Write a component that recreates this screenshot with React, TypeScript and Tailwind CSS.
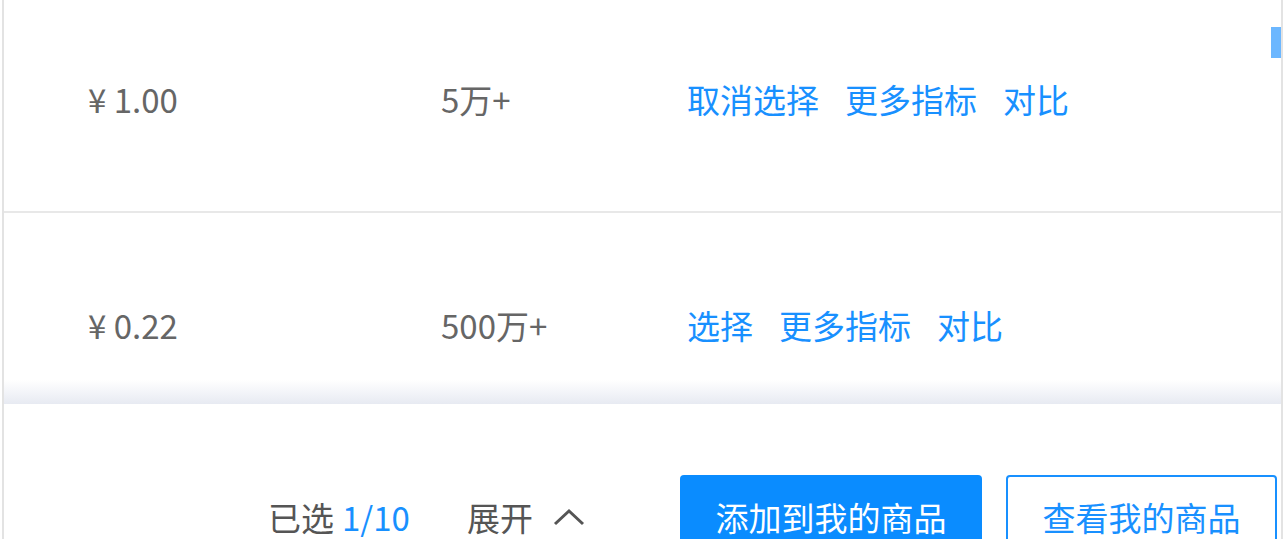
import { ReactNode } from "react";

type Row = {
  price: string;
  sales: string;
  selected: boolean;
};

const rows: Row[] = [
  { price: "¥ 1.00", sales: "5万+", selected: true },
  { price: "¥ 0.22", sales: "500万+", selected: false },
];

const font = { fontFamily: '"Noto Sans CJK SC", "Noto Sans", sans-serif' };

const Link = ({ children }: { children: ReactNode }) => (
  <span className="text-[#1890ff] cursor-pointer">{children}</span>
);

const TableRow = ({ row }: { row: Row }) => (
  <div className="h-[226px] flex items-center border-b-2 border-[#e8e8e8] text-[33px] leading-none">
    <div className="w-[437px] pl-[84px] text-[#666]">{row.price}</div>
    <div className="w-[246px] text-[#666]">{row.sales}</div>
    <div className="flex gap-[26px]">
      <Link>{row.selected ? "取消选择" : "选择"}</Link>
      <Link>更多指标</Link>
      <Link>对比</Link>
    </div>
  </div>
);

export default function App() {
  return (
    <div className="w-[1284px] h-[539px] overflow-hidden bg-white" style={font}>
      <div className="relative ml-[2px] w-[1281px] h-[539px] border-l-2 border-r-2 border-[#e3e3e3] overflow-hidden">
        <div className="relative h-[404px] overflow-hidden">
          <div className="-mt-[13px]">
            {rows.map((row) => (
              <TableRow key={row.price} row={row} />
            ))}
          </div>
          <div className="absolute left-0 right-0 bottom-0 h-[24px] bg-linear-to-b from-white/0 to-[#e7eaf2]" />
        </div>
        <div className="absolute right-0 top-[27px] w-[10px] h-[31px] bg-[#6cb7ff]" />

        <div className="flex items-center pt-[71px] pl-[264px] text-[33px] leading-none">
          <div className="text-[#555]">
            已选<span className="ml-[8px] text-[#1890ff]">1/10</span>
          </div>
          <div className="ml-[57px] flex items-center text-[#555]">
            展开
            <svg
              className="ml-[20px]"
              width="32"
              height="18"
              viewBox="0 0 32 18"
              fill="none"
              stroke="#555"
              strokeWidth="3"
            >
              <path d="M2 16 L16 3 L30 16" />
            </svg>
          </div>
          <button className="ml-[95px] w-[302px] h-[84px] rounded-[4px] bg-[#0a8cff] text-white text-[33px]">
            添加到我的商品
          </button>
          <button className="ml-[24px] w-[271px] h-[84px] rounded-[4px] border-2 border-[#1890ff] bg-white text-[#1890ff] text-[33px]">
            查看我的商品
          </button>
        </div>
      </div>
    </div>
  );
}
